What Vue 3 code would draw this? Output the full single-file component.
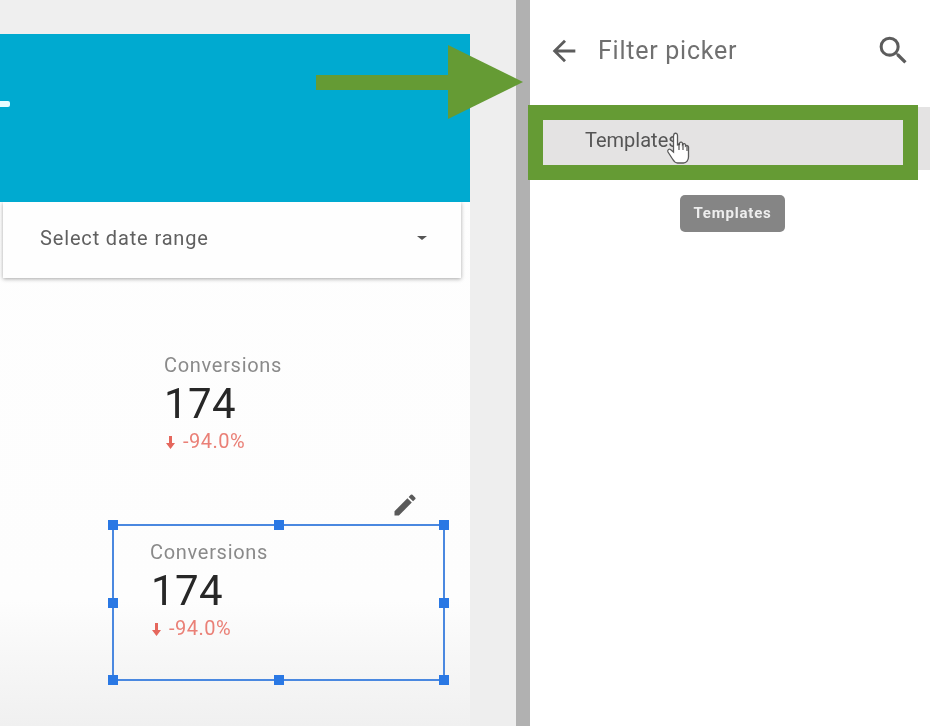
<script setup>
const handles = [
  { x: 0, y: 0 }, { x: 50, y: 0 }, { x: 100, y: 0 },
  { x: 0, y: 50 }, { x: 100, y: 50 },
  { x: 0, y: 100 }, { x: 50, y: 100 }, { x: 100, y: 100 },
]
</script>

<template>
  <div class="screen">
    <section class="canvas">
      <div class="teal"><span class="logo-mark"></span></div>
      <div class="date-card">
        <span>Select date range</span>
        <span class="caret"></span>
      </div>

      <div class="score score-plain">
        <div class="score-label">Conversions</div>
        <div class="score-value">174</div>
        <div class="score-delta"><span class="down">
          <svg width="9" height="13" viewBox="0 0 9 13"><path d="M3 0h3v7h3l-4.500 6L0 7h3z" fill="#e5675d"/></svg>
        </span>-94.0%</div>
      </div>

      <svg class="pencil" width="28" height="28" viewBox="0 0 24 24">
        <path d="M3 17.250V21h3.750L17.810 9.940l-3.750-3.750L3 17.250zM20.710 7.040a1 1 0 0 0 0-1.410l-2.340-2.340a1 1 0 0 0-1.410 0l-1.830 1.830 3.750 3.750 1.830-1.830z" fill="#5a5a5a"/>
      </svg>

      <div class="selection">
        <div class="handles">
          <span
            v-for="h in handles"
            :key="h.x + '-' + h.y"
            class="handle"
            :style="{ left: h.x + '%', top: h.y + '%' }"
          ></span>
        </div>
        <div class="score-label">Conversions</div>
        <div class="score-value">174</div>
        <div class="score-delta"><span class="down">
          <svg width="9" height="13" viewBox="0 0 9 13"><path d="M3 0h3v7h3l-4.500 6L0 7h3z" fill="#e5675d"/></svg>
        </span>-94.0%</div>
      </div>
    </section>

    <div class="gutter"></div>
    <div class="divider"></div>

    <aside class="panel">
      <header class="panel-head">
        <svg width="34" height="34" viewBox="0 0 24 24">
          <path d="M20 11H7.830l5.590-5.590L12 4l-8 8 8 8 1.410-1.410L7.830 13H20v-2z" fill="#5c5c5c"/>
        </svg>
        <h1>Filter picker</h1>
        <svg class="search" width="37" height="37" viewBox="0 0 24 24">
          <path d="M15.500 14h-.790l-.280-.270A6.470 6.470 0 0 0 16 9.500 6.500 6.500 0 1 0 9.500 16c1.610 0 3.090-.590 4.230-1.570l.270.280v.790l5 4.990L20.490 19l-4.990-5zm-6 0C7.010 14 5 11.990 5 9.500S7.010 5 9.500 5 14 7.010 14 9.500 11.990 14 9.500 14z" fill="#5c5c5c"/>
        </svg>
      </header>
      <div class="row">Templates</div>
      <div class="tooltip"><span>Templates</span></div>
    </aside>

    <div class="highlight"></div>
    <div class="arrow">
      <span class="shaft"></span>
      <span class="head"></span>
    </div>
    <svg class="hand" width="30" height="36" viewBox="0 0 30 36">
      <path d="M9 3c1.500-1.500 3.500-.500 3.500 1.500V14l2-.500 0-1.500c1-1.500 3-1 3 .5v1c1-1.500 3-1 3 .5v1c1-1 3-.500 3 1V26c0 3-2 6-5 6h-6c-2.500 0-3.500-1.500-5-4L3 21c-1-2 1-3.500 2.500-2.500L8.500 21V5z" fill="#fff" stroke="#5a5a5a" stroke-width="1.300"/>
      <path d="M14 12v7M18 13v6M22 15v5" stroke="#444" stroke-width="1.100"/>
    </svg>
  </div>
</template>

<style>
html, body { margin: 0; background: #fff; }
</style>

<style scoped>
.screen {
  position: relative;
  display: flex;
  width: 930px;
  height: 726px;
  overflow: hidden;
  font-family: Roboto, "Liberation Sans", sans-serif;
  filter: blur(0.7px);
}
.canvas {
  position: relative;
  width: 470px;
  flex: none;
  padding-top: 34px;
  box-sizing: border-box;
  background: linear-gradient(#efefef 0, #efefef 34px, #fefefe 34px, #fdfdfd 600px, #f0f0f0 726px);
}
.teal {
  position: relative;
  height: 168px;
  background: #00aad0;
}
.logo-mark {
  position: absolute;
  left: 0;
  top: 67px;
  width: 10px;
  height: 6px;
  background: #e8fcff;
  border-radius: 0 2px 2px 0;
}
.date-card {
  display: flex;
  align-items: center;
  justify-content: space-between;
  height: 76px;
  margin: 0 9px 0 3px;
  padding: 0 34px 4px 37px;
  box-sizing: border-box;
  background: #fefefe;
  box-shadow: 0 1px 4px rgba(0, 0, 0, 0.35);
  color: #606060;
  font-size: 20px;
  letter-spacing: 0.85px;
}
.caret {
  width: 0;
  height: 0;
  border-left: 5px solid transparent;
  border-right: 5px solid transparent;
  border-top: 4px solid #555;
}
.score {
  position: absolute;
  left: 164px;
  top: 353px;
}
.score-label {
  color: #8a8a8a;
  font-size: 20px;
  line-height: 24px;
  letter-spacing: 0.7px;
}
.score-value {
  color: #272727;
  font-size: 42px;
  line-height: 50px;
  margin-top: 2px;
  letter-spacing: 0.4px;
}
.score-delta {
  display: flex;
  align-items: center;
  color: #ea8077;
  font-size: 20px;
  line-height: 26px;
  margin-top: -1px;
  letter-spacing: 0.5px;
}
.down {
  display: flex;
  width: 19px;
  padding-left: 2px;
  box-sizing: border-box;
  margin-top: 3px;
}
.pencil {
  position: absolute;
  left: 391px;
  top: 491px;
}
.selection {
  position: absolute;
  left: 112px;
  top: 524px;
  width: 333px;
  height: 157px;
  box-sizing: border-box;
  padding: 14px 0 0 36px;
  border: 2px solid #4a88e0;
}
.selection .score-value { margin-left: 1px; }
.handles {
  position: absolute;
  inset: -1px;
}
.handle {
  position: absolute;
  width: 10px;
  height: 10px;
  margin: -5px 0 0 -5px;
  background: #2a78e4;
}
.gutter {
  width: 46px;
  flex: none;
  background: #eeeeee;
}
.divider {
  width: 14px;
  flex: none;
  background: #b1b1b1;
}
.panel {
  position: relative;
  flex: 1;
  background: #fff;
}
.panel-head {
  display: flex;
  align-items: center;
  height: 107px;
  padding: 0 18px 6px 17px;
  box-sizing: border-box;
}
.panel-head h1 {
  margin: 0 0 0 17px;
  color: #707070;
  font-size: 25px;
  font-weight: 400;
  letter-spacing: 0.75px;
}
.search { margin-left: auto; }
.row {
  height: 63px;
  padding: 20px 0 0 55px;
  box-sizing: border-box;
  background: #e4e3e3;
  color: #555;
  font-size: 20px;
  line-height: 26px;
}
.tooltip {
  position: absolute;
  left: 150px;
  top: 195px;
  width: 105px;
  height: 37px;
  border-radius: 5px;
  background: #858585;
  color: #eee;
  font-size: 15px;
  font-weight: 700;
  line-height: 37px;
  text-align: center;
  letter-spacing: 0.8px;
}
.tooltip span { filter: blur(0.6px); display: block; }
.highlight {
  position: absolute;
  left: 528px;
  top: 105px;
  width: 390px;
  height: 75px;
  box-sizing: border-box;
  border: 15px solid #659b34;
}
.arrow {
  position: absolute;
  left: 316px;
  top: 45px;
  display: flex;
  align-items: center;
}
.shaft {
  width: 132px;
  height: 15px;
  background: #659b34;
}
.head {
  width: 0;
  height: 0;
  border-left: 75px solid #659b34;
  border-top: 37px solid transparent;
  border-bottom: 37px solid transparent;
}
.hand {
  position: absolute;
  left: 665px;
  top: 131px;
}
</style>
